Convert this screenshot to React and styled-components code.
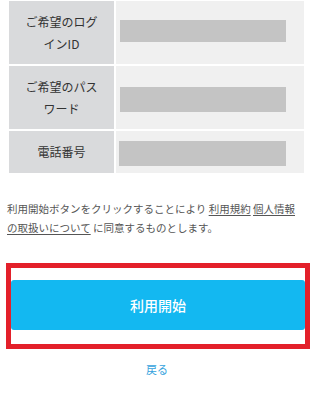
import styled, { createGlobalStyle } from "styled-components";

const GlobalStyle = createGlobalStyle`
  body {
    margin: 0;
    background: #ffffff;
    font-family: "Noto Sans CJK JP", "Noto Sans", sans-serif;
    color: #333333;
  }
`;

const fields = [
  { label: "ご希望のログインID", height: 63, offset: 19, bar: 22, inset: 4 },
  { label: "ご希望のパスワード", height: 63, offset: 21, bar: 25, inset: 4 },
  { label: "電話番号", height: 42, offset: 10, bar: 25, inset: 3 },
];

function App() {
  return (
    <>
      <GlobalStyle />
      <Page>
        <Form>
          {fields.map((f) => (
            <Row key={f.label} $height={f.height}>
              <Label>{f.label}</Label>
              <Value>
                <Input $offset={f.offset} $bar={f.bar} $inset={f.inset} />
              </Value>
            </Row>
          ))}
        </Form>

        <Notice>
          利用開始ボタンをクリックすることにより <NoticeLink>利用規約</NoticeLink>{" "}
          <NoticeLink>個人情報の取扱いについて</NoticeLink> に同意するものとします。
        </Notice>

        <Highlight>
          <StartButton>利用開始</StartButton>
        </Highlight>

        <BackLink>戻る</BackLink>
      </Page>
    </>
  );
}

export default App;

const Page = styled.div`
  width: 314px;
  height: 406px;
  padding-top: 1px;
  box-sizing: border-box;
  overflow: hidden;
`;

const Form = styled.div`
  display: flex;
  flex-direction: column;
  gap: 2px;
  margin: 0 10px 0 9px;
`;

const Row = styled.div`
  display: grid;
  grid-template-columns: 105px 1fr;
  column-gap: 2px;
  height: ${(p) => p.$height}px;
`;

const Label = styled.div`
  display: flex;
  align-items: center;
  justify-content: center;
  padding: 0 12px;
  background: #d9dadc;
  font-size: 12px;
  line-height: 22px;
  text-align: center;
  color: #333333;
`;

const Value = styled.div`
  background: #f0f0f0;
  display: flex;
  align-items: flex-start;
`;

const Input = styled.div`
  margin-top: ${(p) => p.$offset}px;
  margin-left: ${(p) => p.$inset}px;
  width: ${(p) => 170 - p.$inset}px;
  height: ${(p) => p.$bar}px;
  background: #c4c4c4;
`;

const Notice = styled.p`
  margin: 26px 12px 0 7px;
  font-size: 10.5px;
  line-height: 19px;
  color: #555555;
`;

const NoticeLink = styled.a`
  color: #555555;
  text-decoration: underline;
  text-underline-offset: 2px;
  cursor: pointer;
`;

const Highlight = styled.div`
  margin: 26px 4px 0 6px;
  border: 5px solid #e3202a;
  padding: 12px 0 14px;
`;

const StartButton = styled.button`
  display: block;
  width: 100%;
  height: 50px;
  border: none;
  border-radius: 3px;
  background: #13b8f1;
  color: #ffffff;
  font-family: "Noto Sans CJK JP", sans-serif;
  font-size: 14px;
  font-weight: 500;
  cursor: pointer;
`;

const BackLink = styled.a`
  display: block;
  margin-top: 11px;
  text-align: center;
  font-size: 11px;
  line-height: 19px;
  color: #35a2dd;
  cursor: pointer;
`;
